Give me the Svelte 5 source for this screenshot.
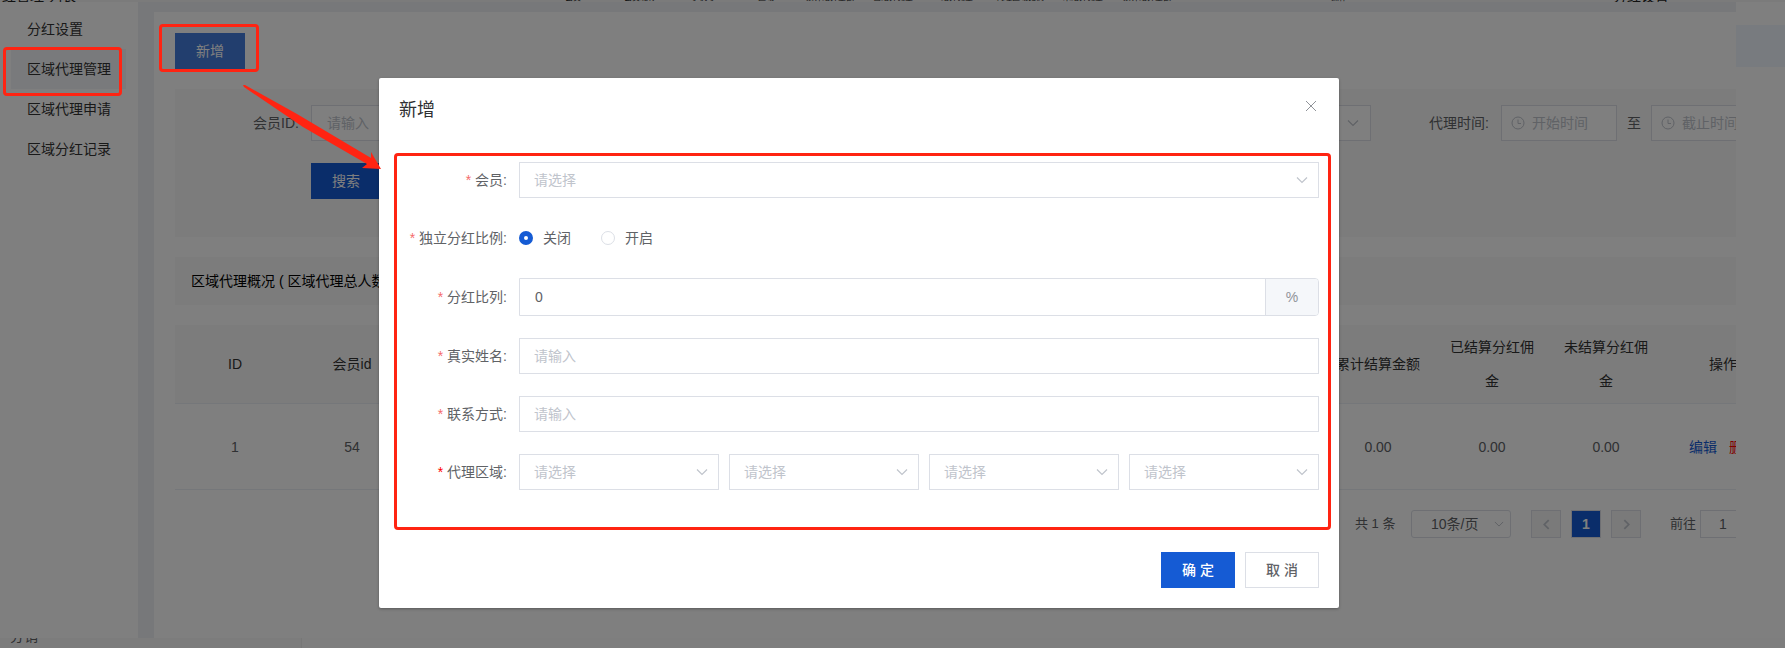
<script>
  const menu = ['分红设置', '区域代理管理', '区域代理申请', '区域分红记录'];
  const backHeads = [
    [512, 'ID'], [577, '会员ID'], [640, '会员昵称'], [703, '手机号'], [766, '区域'],
    [830, '累计结算金额'], [893, '已结算佣金'], [957, '结算佣金'], [1020, '代理区域比例'],
    [1083, '未结算佣金'], [1147, '累计结算金额'], [1339, '操作']
  ];
  const hidden = Array(8).fill('');
  const heads = ['ID', '会员id', ...hidden, '累计结算金额', '已结算分红佣金', '未结算分红佣金'];
  const cells = ['1', '54', ...hidden, '0.00', '0.00', '0.00'];
  const levels = [0, 1, 2, 3];
  let rate = $state('0');
  let mode = $state('off');
</script>

{#snippet chevron()}
  <svg class="chev" viewBox="0 0 12 8" aria-hidden="true"><path d="M1 1.5 6 6.5 11 1.5" /></svg>
{/snippet}
{#snippet clock()}
  <svg class="clock" viewBox="0 0 14 14" aria-hidden="true"><circle cx="7" cy="7" r="6" /><path d="M7 3.5V7.5H10" /></svg>
{/snippet}

<div class="screen">
  <div class="back-top">
    <span class="cut" style="left: 32px">分红管理 列表</span>
    {#each backHeads as [x, label]}
      <span class="cut small" style="left: {x}px">{label}</span>
    {/each}
    <span class="cut" style="left: 1641px">分红设置</span>
  </div>

  <div class="page">
    <nav class="side">
      {#each menu as item, i}
        <a href="#{i}" class:active={i === 1}>{item}</a>
      {/each}
    </nav>
    <main class="main">
      <button class="btn soft">新增</button>

      <section class="filter">
        <div class="frow">
          <label class="flabel" for="mid">会员ID:</label>
          <input id="mid" class="box mid" placeholder="请输入" />
          <div class="box level">{@render chevron()}</div>
          <label class="tlabel" for="start">代理时间:</label>
          <div class="box date">{@render clock()}<input id="start" placeholder="开始时间" /></div>
          <span class="to">至</span>
          <div class="box date">{@render clock()}<input aria-label="截止时间" placeholder="截止时间" /></div>
        </div>
        <button class="btn search">搜索</button>
      </section>

      <section class="summary">区域代理概况 ( 区域代理总人数</section>

      <table>
        <colgroup>
          <col class="wide" />
          {#each heads.slice(1) as _}<col class="mid-col" />{/each}
          <col class="wide" />
        </colgroup>
        <thead>
          <tr>{#each heads as h}<th>{h}</th>{/each}<th>操作</th></tr>
        </thead>
        <tbody>
          <tr>
            {#each cells as c}<td>{c}</td>{/each}
            <td><div class="ops"><a class="edit" href="#edit">编辑</a><a class="del" href="#del">删除</a></div></td>
          </tr>
        </tbody>
      </table>

      <div class="pager">
        <span class="total">共 1 条</span>
        <div class="size"><select aria-label="10条/页"><option>10条/页</option></select>{@render chevron()}</div>
        <button class="pg" aria-label="‹"><svg viewBox="0 0 8 12"><path d="M6.500 1 1.500 6 6.500 11" /></svg></button>
        <button class="pg on">1</button>
        <button class="pg" aria-label="›"><svg viewBox="0 0 8 12"><path d="M1.500 1 6.500 6 1.500 11" /></svg></button>
        <label class="goto" for="goto">前往</label>
        <input id="goto" class="jump" value="1" />
      </div>
    </main>
    <aside class="rail"><div></div></aside>
  </div>

  <div class="back-bottom"><div class="foot"><span>分销</span></div></div>

  <div class="mask">
    <div class="dialog" role="dialog" aria-labelledby="title">
      <header>
        <h2 id="title">新增</h2>
        <button class="close" aria-label="×"><svg viewBox="0 0 12 12"><path d="M1 1 11 11M11 1 1 11" /></svg></button>
      </header>
      <form>
        <div class="row">
          <label class="lab" for="member">会员:</label>
          <div class="sel"><select id="member"><option>请选择</option></select>{@render chevron()}</div>
        </div>
        <div class="row" role="radiogroup" aria-labelledby="ratio">
          <span class="lab" id="ratio">独立分红比例:</span>
          <label class="radio"><input type="radio" name="mode" value="off" bind:group={mode} />关闭</label>
          <label class="radio"><input type="radio" name="mode" value="on" bind:group={mode} />开启</label>
        </div>
        <div class="row tall">
          <label class="lab" for="rate">分红比列:</label>
          <div class="group"><input id="rate" bind:value={rate} /><span>%</span></div>
        </div>
        <div class="row">
          <label class="lab" for="name">真实姓名:</label>
          <input id="name" class="field" placeholder="请输入" />
        </div>
        <div class="row">
          <label class="lab" for="phone">联系方式:</label>
          <input id="phone" class="field" placeholder="请输入" />
        </div>
        <div class="row">
          <label class="lab strong" for="r0">代理区域:</label>
          <div class="regions">
            {#each levels as i}
              <div class="sel"><select id="r{i}" aria-label="请选择"><option>请选择</option></select>{@render chevron()}</div>
            {/each}
          </div>
        </div>
      </form>
      <footer>
        <button class="act ok">确 定</button>
        <button class="act">取 消</button>
      </footer>
    </div>
  </div>

  <div class="mark m-add"></div>
  <div class="mark m-menu"></div>
  <div class="mark m-form"></div>
  <svg class="arrow" viewBox="0 0 140 86" aria-hidden="true"><path d="M0 0 2 0 54 29 128 73 128 67 138 84 119 83 124 79 60 42 1 2Z" /></svg>
</div>

<style>
  :global(body) { background: #fff; }
  .screen {
    position: relative;
    display: flex;
    flex-direction: column;
    min-height: 100vh;
    overflow: hidden;
    color: #606266;
    font: 14px/20px "Liberation Sans", "Noto Sans CJK SC", sans-serif;
  }
  .screen :is(input, button, select) { font: inherit; color: inherit; box-sizing: border-box; border-radius: 0; outline: none; min-width: 0; }
  a { color: inherit; text-decoration: none; }
  svg { fill: none; stroke: currentColor; }
  .back-top { position: relative; height: 2px; overflow: hidden; background: #f6f6f7; color: #222; }
  .cut { position: absolute; bottom: -4px; transform: translateX(-50%); white-space: nowrap; }
  .cut.small { font-size: 8px; line-height: 10px; bottom: -1px; }
  .page { flex: 1; display: flex; }
  .side { flex: none; width: 138px; box-sizing: border-box; padding: 7px 0 0 11px; background: #fff; color: #333; }
  .side a { display: block; height: 40px; width: 115px; box-sizing: border-box; padding-left: 16px; line-height: 40px; }
  .side a.active { background: #f3f5f8; }
  .main {
    flex: 1;
    min-width: 0;
    overflow: hidden;
    box-sizing: border-box;
    padding: 21px 0 0 21px;
    border-left: 16px solid #eff1f5;
    border-top: 10px solid #eff1f5;
    background: #fff;
  }
  .rail { flex: none; width: 49px; padding-top: 23px; }
  .rail div { height: 42px; background: #f0f6ff; }
  .btn { display: block; width: 70px; height: 36px; padding: 0; border: 0; background: #155bd4; }
  .screen .btn { color: #fff; }
  .soft { background: #447ddd; }
  .filter { margin-top: 20px; padding: 16px 0 38px; background: #f9f9f9; }
  .frow { display: flex; align-items: center; width: 1800px; color: #606266; }
  .flabel { width: 124px; padding-right: 12px; text-align: right; }
  .box { box-sizing: border-box; height: 36px; border: 1px solid #dcdfe6; background: #fff; }
  .mid { width: 300px; padding: 0 15px; }
  .level { position: relative; width: 300px; margin-left: 460px; color: #c0c4cc; }
  .tlabel { margin-left: 58px; width: 60px; white-space: nowrap; margin-right: 12px; color: #606266; }
  .date { display: flex; align-items: center; gap: 7px; width: 116px; padding-left: 9px; color: #c0c4cc; }
  .date input { flex: 1; border: 0; padding: 0; background: none; }
  .clock { flex: none; width: 14px; height: 14px; }
  .to { width: 34px; text-align: center; }
  .search { width: 70px; margin: 22px 0 0 136px; }
  .summary { margin-top: 20px; height: 48px; padding-left: 16px; line-height: 48px; background: #f9f9f9; color: #000; white-space: nowrap; }
  table { margin-top: 20px; width: 1608px; table-layout: fixed; border-collapse: separate; border-spacing: 0; }
  .wide { width: 120px; }
  .mid-col { width: 114px; }
  th, td { box-sizing: border-box; border-bottom: 1px solid #ebeef5; padding: 0 14px; text-align: center; }
  th { height: 79px; line-height: 34px; font-weight: 400; background: #f9f9f9; color: #333; }
  td { height: 86px; }
  .ops { display: flex; justify-content: center; gap: 12px; }
  .edit { color: #155bd4; }
  .del { color: #f00; }
  .pager { display: flex; align-items: center; width: 1608px; margin-top: 20px; padding-left: 1180px; box-sizing: border-box; height: 28px; }
  .total { width: 41px; margin-right: 15px; white-space: nowrap; font-size: 13px; }
  .size { position: relative; flex: none; width: 100px; margin-right: 20px; }
  .size select { appearance: none; width: 100%; height: 28px; padding: 0 0 0 19px; border: 1px solid #dcdfe6; border-radius: 3px; background: none; }
  .size .chev { right: 7px; width: 10px; color: #c0c4cc; }
  .pg { flex: none; display: flex; align-items: center; justify-content: center; width: 30px; height: 28px; margin-right: 10px; padding: 0; border: 1px solid #dcdfe6; background: #f4f4f5; }
  .pg svg { width: 7px; height: 11px; color: #c0c4cc; stroke-width: 2; }
  .screen .pg.on { background: #155bd4; color: #fff; font-weight: 700; }
  .goto { margin: 0 4px 0 19px; flex: none; font-size: 13px; }
  .jump { width: 46px; height: 28px; padding: 0; border: 1px solid #dcdfe6; text-align: center; }
  .back-bottom { height: 10px; overflow: hidden; background: #fdfdfd; }
  .foot { display: flex; align-items: flex-end; width: 301px; height: 10px; border-right: 1px solid #eee; background: #f9f9f9; }
  .foot span { padding: 0 0 2px 10px; }
  .mask { position: absolute; inset: 0; box-sizing: border-box; padding: 78px 67px 40px 0; background: rgb(0 0 0 / 50%); }
  .dialog { width: 960px; max-width: 100%; margin: 0 auto; box-sizing: border-box; border-radius: 2px; background: #fff; box-shadow: 0 1px 3px rgb(0 0 0 / 30%); }
  header { display: flex; justify-content: space-between; padding: 20px 20px 0; height: 64px; }
  h2 { margin: 0; font-size: 18px; line-height: 24px; font-weight: 400; color: #303133; }
  .close { width: 16px; height: 16px; padding: 2px; border: 0; background: none; }
  .screen .close { color: #909399; }
  .close svg { display: block; width: 12px; height: 12px; }
  form { display: flex; flex-direction: column; gap: 22px; padding: 0 20px; }
  .row { display: flex; align-items: center; height: 36px; }
  .tall { height: 38px; }
  .lab { flex: none; width: 108px; padding-right: 12px; text-align: right; }
  .lab::before { content: "*"; margin-right: 4px; color: #f56c6c; }
  .strong::before { color: #f00; }
  .sel { position: relative; flex: 1; min-width: 0; color: #c0c4cc; }
  .sel select { appearance: none; width: 100%; display: block; height: 36px; border: 1px solid #dcdfe6; padding: 0 14px; background: #fff; }
  .chev { position: absolute; right: 11px; top: 50%; width: 12px; height: 8px; margin-top: -4px; pointer-events: none; stroke-width: 1.2; }
  .field { flex: 1; height: 36px; padding: 0 14px; border: 1px solid #dcdfe6; }
  ::placeholder { color: #c0c4cc; opacity: 1; }
  .radio { display: flex; align-items: center; gap: 10px; margin-right: 30px; }
  .radio input { appearance: none; width: 14px; height: 14px; margin: 0; border: 1px solid #dcdfe6; }
  .screen .radio input { border-radius: 50%; }
  .radio input:checked { border: 5px solid #155bd4; }
  .group { flex: 1; display: flex; height: 38px; box-sizing: border-box; border: 1px solid #dcdfe6; border-radius: 0 4px 4px 0; overflow: hidden; }
  .group input { flex: 1; border: 0; padding: 0 15px; }
  .group span { width: 52px; border-left: 1px solid #dcdfe6; background: #f5f7fa; color: #909399; line-height: 36px; text-align: center; }
  .regions { flex: 1; display: grid; grid-template-columns: 200fr 190fr 190fr 190fr; gap: 10px; }
  footer { display: flex; justify-content: flex-end; gap: 10px; padding: 62px 20px 20px; }
  .act { width: 74px; height: 36px; padding: 0; border: 1px solid #dcdfe6; background: #fff; }
  .screen .act { font-weight: 500; }
  .screen .ok { border-color: #155bd4; background: #155bd4; color: #fff; }
  .mark { position: absolute; box-sizing: border-box; border: 3px solid #ff2412; border-radius: 4px; pointer-events: none; }
  .m-add { left: 159px; top: 24px; width: 100px; height: 48px; }
  .m-menu { left: 3px; top: 47px; width: 119px; height: 49px; }
  .m-form { left: 394px; top: 153px; width: 937px; height: 377px; }
  .arrow { position: absolute; left: 243px; top: 85px; width: 140px; height: 86px; fill: #ff2412; stroke: none; }
</style>
